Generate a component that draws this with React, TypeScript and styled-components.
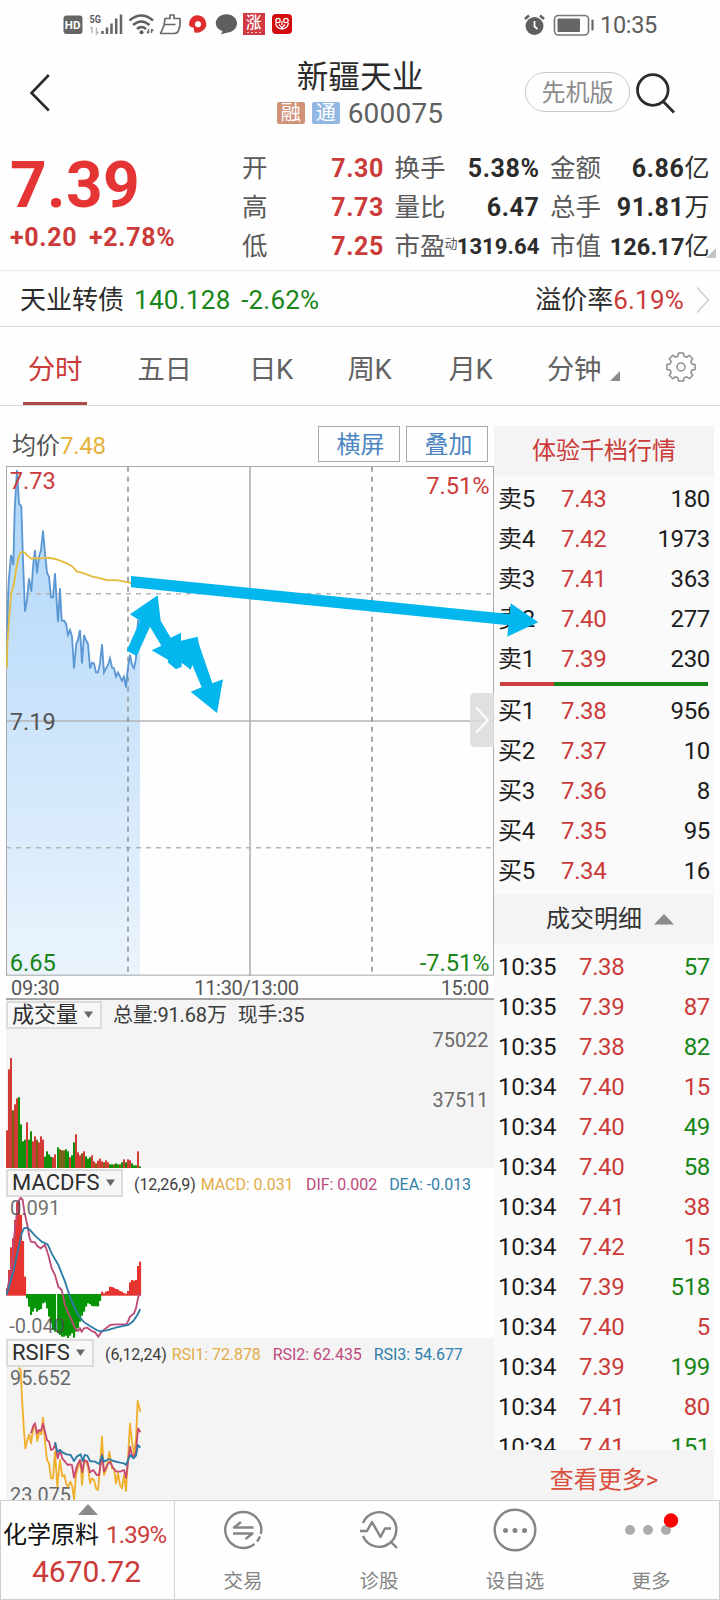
import React from "react";
import styled, { createGlobalStyle } from "styled-components";

const RED = "#cb3b39";
const GREEN = "#188518";
const FONT = 'Roboto, "Noto Sans CJK SC", sans-serif';

const Global = createGlobalStyle`
  * { box-sizing: border-box; }
  body { margin: 0; background: #fefefe; font-family: ${FONT}; color: #2b2b2b; }
  svg { display: block; flex: none; }
`;

const Screen = styled.main`
  position: relative;
  width: 720px;
  height: 1600px;
  overflow: hidden;
  display: flex;
  flex-direction: column;
  white-space: nowrap;
`;

/* ---------- status bar ---------- */
const StatusBar = styled.div`
  height: 48px;
  display: flex;
  align-items: center;
  justify-content: space-between;
  padding: 1px 63px 0 63px;
`;
const StatusGroup = styled.div`
  display: flex;
  align-items: center;
`;
const Clock = styled.span`
  font-size: 23.5px;
  line-height: 30px;
  letter-spacing: -0.3px;
  color: #5c5c5c;
  margin: 1px 0 0 6px;
`;

/* ---------- header ---------- */
const Header = styled.header`
  height: 88px;
  display: grid;
  grid-template-columns: 240px 240px 240px;
`;
const BackButton = styled.div`
  padding: 24px 0 0 28px;
`;
const TitleBlock = styled.div`
  display: flex;
  flex-direction: column;
  align-items: center;
`;
const Title = styled.h1`
  margin: 10px 0 0;
  font-size: 31.7px;
  font-weight: 400;
  line-height: 40px;
`;
const CodeLine = styled.div`
  display: flex;
  align-items: center;
  margin-top: -4px;
  gap: 7px;
`;
const Badge = styled.span<{ $color: string }>`
  width: 28px;
  height: 22px;
  border-radius: 2px;
  background: ${(p) => p.$color};
  color: #fff;
  font-size: 20px;
  line-height: 22px;
  text-align: center;
`;
const Code = styled.span`
  font-size: 28px;
  line-height: 36px;
  letter-spacing: 0.2px;
  color: #616161;
  margin: 2px 0 0 1px;
`;
const HeaderActions = styled.div`
  display: flex;
  align-items: flex-start;
  padding: 24px 0 0 45px;
  gap: 5px;
`;
const Pill = styled.span`
  width: 105px;
  height: 40px;
  border: 1px solid #c9c9c9;
  border-radius: 20px;
  color: #8d8d8d;
  font-size: 24px;
  line-height: 41px;
  text-align: center;
`;

/* ---------- quote ---------- */
const Quote = styled.section`
  height: 135px;
  border-bottom: 1px solid #ececec;
  display: flex;
  position: relative;
`;
const PriceBlock = styled.div`
  width: 242px;
  padding: 13px 0 0 10px;
  color: ${RED};
  font-weight: 700;
`;
const Price = styled.div`
  font-size: 64px;
  line-height: 74px;
  letter-spacing: 0.3px;
  color: #e53434;
`;
const Change = styled.div`
  display: flex;
  gap: 11.5px;
  font-size: 25px;
  line-height: 30px;
  letter-spacing: 0.7px;
`;
const Stats = styled.div`
  display: grid;
  grid-template-columns: 142px 145px 159.5px;
  grid-auto-rows: 39px;
  column-gap: 10.5px;
  padding-top: 13px;
  width: 468px;
`;
const Stat = styled.div`
  display: flex;
  justify-content: space-between;
  align-items: center;
  line-height: 39px;
`;
const StatLabel = styled.span`
  font-size: 25.5px;
  color: #5a5a5a;
`;
const Tiny = styled.sup`
  font-size: 13px;
  line-height: 1;
  vertical-align: 7px;
  margin-left: -1px;
  margin-right: -3px;
`;
const StatValue = styled.span<{ $red?: boolean; $size: number }>`
  font-size: ${(p) => p.$size}px;
  font-weight: 700;
  letter-spacing: ${(p) => (p.$size < 25 ? 0.1 : 0.6)}px;
  color: ${(p) => (p.$red ? RED : "#2c2c2c")};
`;
const Unit = styled.span`
  font-weight: 400;
  font-size: 25px;
  letter-spacing: 0;
`;
const Corner = styled.svg`
  position: absolute;
  right: 4px;
  bottom: 12px;
`;

/* ---------- bond row ---------- */
const BondRow = styled.section`
  height: 56px;
  border-bottom: 1px solid #dcdcdc;
  display: flex;
  align-items: center;
  padding: 2px 10px 0 20px;
  font-size: 26px;
  line-height: 52px;
`;
const Tint = styled.span<{ $color: string; $left?: number; $spacing?: number }>`
  color: ${(p) => p.$color};
  margin-left: ${(p) => p.$left ?? 0}px;
  ${(p) => p.$spacing !== undefined && `letter-spacing: ${p.$spacing}px;`}
`;
const Push = styled.span`
  margin-left: auto;
  margin-right: 11px;
`;

/* ---------- tabs ---------- */
const Tabs = styled.nav`
  height: 79px;
  border-bottom: 1px solid #d6d6d6;
  display: flex;
  padding-left: 23px;
`;
const Tab = styled.div<{ $w: number; $on?: boolean }>`
  width: ${(p) => p.$w}px;
  display: flex;
  align-items: center;
  justify-content: center;
  padding-top: 4px;
  font-size: 27.5px;
  letter-spacing: -0.3px;
  color: ${(p) => (p.$on ? RED : "#636363")};
  border-bottom: 3px solid ${(p) => (p.$on ? "#b04a47" : "transparent")};
  border-radius: 3px 3px 0 0;
`;
const TabArrow = styled.svg`
  margin: 18px 0 0 9px;
`;

/* ---------- body ---------- */
const Body = styled.div`
  height: 1094px;
  display: flex;
  padding-left: 6px;
`;
const ChartColumn = styled.div`
  width: 488px;
  display: flex;
  flex-direction: column;
`;
const ChartTop = styled.div`
  height: 60px;
  padding: 20px 6px 0 6px;
  display: flex;
  align-items: flex-start;
  font-size: 24px;
`;
const Average = styled.span`
  flex: 1;
  color: #555;
  line-height: 40px;
`;
const ChartButton = styled.span`
  width: 82px;
  height: 36px;
  margin-left: 6px;
  padding-left: 3px;
  border: 1px solid #a9a9a9;
  color: #4c86c2;
  line-height: 36px;
  text-align: center;
`;
const TimeAxis = styled.div`
  height: 24px;
  border-bottom: 2px solid #a5a5a5;
  display: grid;
  grid-template-columns: 1fr 1fr 1fr;
  padding: 0 5px;
  font-size: 20px;
  line-height: 25px;
  letter-spacing: -0.3px;
  color: #555;
  & > :nth-child(2) { text-align: center; padding-right: 7px; }
  & > :nth-child(3) { text-align: right; }
`;
const Panel = styled.section<{ $h: number; $gray?: boolean }>`
  position: relative;
  height: ${(p) => p.$h}px;
  background: ${(p) => (p.$gray ? "#f4f4f4" : "#fefefe")};
`;
const PanelHead = styled.div`
  position: absolute;
  top: 1px;
  left: 0;
  display: flex;
  align-items: flex-start;
`;
const Picker = styled.span<{ $w: number }>`
  width: ${(p) => p.$w}px;
  height: 28px;
  border: 2px solid #dcdcdc;
  background: #f7f7f7;
  display: flex;
  align-items: center;
  padding-left: 4px;
  gap: 6px;
  font-size: 22px;
  line-height: 24px;
  color: #2e2e2e;
`;
const Legend = styled.span<{ $color?: string; $left: number; $size?: number }>`
  margin-left: ${(p) => p.$left}px;
  margin-top: ${(p) => (p.$size ? 0 : 2)}px;
  font-size: ${(p) => p.$size ?? 16}px;
  line-height: 28px;
  letter-spacing: ${(p) => (p.$size ? -0.15 : -0.06)}px;
  color: ${(p) => p.$color ?? "#3c3c3c"};
`;

/* ---------- order book ---------- */
const BookColumn = styled.aside`
  width: 220px;
  margin-top: 20px;
  background: #fafafa;
  display: flex;
  flex-direction: column;
  font-size: 24px;
`;
const BookHead = styled.div<{ $color: string; $shift?: number; $drop?: number }>`
  height: 50px;
  flex: none;
  background: #f4f4f4;
  color: ${(p) => p.$color};
  display: flex;
  align-items: center;
  justify-content: center;
  gap: 12px;
  line-height: 30px;
  padding-top: ${(p) => p.$drop ?? 0}px;
  padding-left: ${(p) => p.$shift ?? 0}px;
`;
const Levels = styled.div<{ $top: number }>`
  padding-top: ${(p) => p.$top}px;
`;
const Row = styled.div<{ $price: number }>`
  display: grid;
  grid-template-columns: ${(p) => p.$price}px 1fr auto;
  height: 40px;
  line-height: 40px;
  padding: 0 4px 0 4px;
  letter-spacing: -0.35px;
  color: #1d1d1d;
`;
const Balance = styled.div`
  display: flex;
  height: 4px;
  margin: 3px 6px 5px;
  background: ${GREEN};
`;
const BalanceBuy = styled.div`
  width: 54px;
  background: #cb403c;
`;
const Ticks = styled.div`
  height: 506px;
  padding-top: 3px;
  overflow: hidden;
`;

/* ---------- bottom bar ---------- */
const BottomBar = styled.footer`
  height: 100px;
  display: flex;
  background: #fefefe;
  border: 1px solid #cfcfcf;
`;
const Sector = styled.div`
  width: 174px;
  border-right: 1px solid #d4d4d4;
  display: flex;
  flex-direction: column;
  align-items: center;
`;
const SectorName = styled.div`
  display: flex;
  gap: 7px;
  font-size: 24px;
  line-height: 36px;
  margin-top: 2px;
  color: #111;
  align-self: flex-start;
  padding-left: 2px;
`;
const SectorValue = styled.div`
  font-size: 30px;
  line-height: 38px;
  padding-right: 2px;
  color: ${RED};
`;
const NavItem = styled.div`
  flex: 1;
  display: flex;
  flex-direction: column;
  align-items: center;
  padding-top: 5px;
  font-size: 19.5px;
  line-height: 26px;
  color: #858585;
  gap: 15px;
`;

const Arrows = styled.svg`
  position: absolute;
  left: 120px;
  top: 560px;
`;
const SideTab = styled.svg`
  position: absolute;
  left: 470px;
  top: 693px;
`;

/* ---------- data ---------- */
const stats: { l: string; v: string; u?: string; red?: boolean; tiny?: string; size?: number }[] = [
  { l: "开", v: "7.30", red: true },
  { l: "换手", v: "5.38%" },
  { l: "金额", v: "6.86", u: "亿" },
  { l: "高", v: "7.73", red: true },
  { l: "量比", v: "6.47" },
  { l: "总手", v: "91.81", u: "万" },
  { l: "低", v: "7.25", red: true },
  { l: "市盈", v: "1319.64", tiny: "动", size: 22 },
  { l: "市值", v: "126.17", u: "亿", size: 23.5 },
];
const asks = [["卖5", "7.43", "180"], ["卖4", "7.42", "1973"], ["卖3", "7.41", "363"], ["卖2", "7.40", "277"], ["卖1", "7.39", "230"]];
const bids = [["买1", "7.38", "956"], ["买2", "7.37", "10"], ["买3", "7.36", "8"], ["买4", "7.35", "95"], ["买5", "7.34", "16"]];
const ticks: [string, string, string, boolean][] = [
  ["10:35", "7.38", "57", false], ["10:35", "7.39", "87", true], ["10:35", "7.38", "82", false],
  ["10:34", "7.40", "15", true], ["10:34", "7.40", "49", false], ["10:34", "7.40", "58", false],
  ["10:34", "7.41", "38", true], ["10:34", "7.42", "15", true], ["10:34", "7.39", "518", false],
  ["10:34", "7.40", "5", true], ["10:34", "7.39", "199", false], ["10:34", "7.41", "80", true],
  ["10:34", "7.41", "151", false],
];

/* Chart series use three units per pixel. */
const priceLine =
  "20,770 23,600 26,515 33,435 40,465 44,300 51,180 57,280 64,290 69,450 75,605 81,570 87,505 94,545 100,460 105,420 111,490 117,440 123,420 129,362 135,430 141,488 147,500 153,562 159,562 165,490 171,590 174,635 180,535 185,632 192,632 198,640 204,675 210,660 216,680 222,775 229,700 234,690 240,660 246,760 252,675 258,690 264,702 270,775 276,758 282,760 288,787 294,787 300,760 306,703 312,787 318,775 324,765 330,745 336,772 342,775 348,800 354,787 360,800 366,812 372,800 378,832 384,770 390,735 396,765 402,775 408,745 414,632 418,632";
const averageLine =
  "20,775 22,700 30,590 34,550 42,520 48,480 54,450 60,430 68,425 75,428 82,437 95,446 105,444 120,446 135,443 150,444 165,447 180,452 195,458 210,465 220,472 230,484 245,488 260,493 275,499 290,502 320,510 355,511 370,514 395,519";

const volume: [number, string][] = [
  [541, "r"], [358, "r"], [324, "r"], [481, "o"], [463, "r"], [445, "r"], [442, "g"], [523, "g"], [574, "g"], [569, "g"],
  [517, "r"], [569, "g"], [544, "g"], [574, "r"], [559, "r"], [569, "o"], [577, "r"], [559, "r"], [569, "r"], [620, "g"],
  [604, "g"], [613, "g"], [620, "g"], [622, "r"], [613, "r"], [592, "g"], [598, "o"], [601, "o"], [601, "o"], [598, "g"],
  [604, "g"], [622, "r"], [616, "g"], [577, "g"], [553, "r"], [607, "r"], [616, "r"], [610, "o"], [604, "r"], [619, "g"],
  [626, "g"], [622, "g"], [616, "r"], [634, "r"], [640, "o"], [632, "r"], [626, "r"], [634, "r"], [637, "o"], [631, "r"],
  [637, "r"], [643, "g"], [643, "g"], [643, "o"], [640, "g"], [643, "g"], [643, "o"], [637, "g"], [628, "r"], [637, "g"],
  [628, "r"], [631, "r"], [640, "g"], [646, "g"], [646, "g"], [604, "r"], [649, "g"],
];
const barColor: Record<string, string> = { r: "#d23b35", g: "#0f8f0a", o: "#7a6218" };
const macd = [
  370, 315, 247, 220, 165, 112, 110, 150, 228, 335, 400, 425, 450, 440, 430, 440, 435, 432, 415, 412, 430, 455, 475, 495, 500,
  505, 510, 515, 515, 512, 520, 512, 505, 518, 500, 490, 470, 452, 440, 425, 415, 418, 423, 424, 424, 424, 408,
  380, 385, 380, 378, 365, 366, 368, 372, 373, 378, 380, 384, 386, 378, 352, 345, 347, 345, 303, 290,
];
const barX = (i: number) => (i < 25 ? 18 : 21) + 6 * i;

const Down = () => (
  <svg width="10" height="9"><path d="M0 .5h9L4.500 7z" fill="#666" /></svg>
);

const PriceChart = () => (
  <svg width="488" height="510" viewBox="18 168 1464 1530" fontFamily={FONT} fontSize="71">
    <defs>
      <linearGradient id="area" x1="0" y1="0" x2="0" y2="1">
        <stop offset="0" stopColor="#aed5f9" />
        <stop offset="1" stopColor="#ebf4fd" />
      </linearGradient>
    </defs>
    <polygon points={`18,1698 ${priceLine} 420,632 420,1698`} fill="url(#area)" />
    <g stroke="#b4b4b4" strokeWidth="5" fill="none">
      <path d="M18 933H1482M750 168V1698" />
      <path d="M18 551H1482M18 1313H1482" strokeDasharray="15 15" strokeWidth="4.500" />
      <path d="M384 170V1690M1116 170V1690" strokeDasharray="15 15" stroke="#979797" />
    </g>
    <rect x="19.500" y="169.500" width="1461" height="1526" fill="none" stroke="#a9a9a9" strokeWidth="3" />
    <polyline points={priceLine} fill="none" stroke="#5b97d3" strokeWidth="5.500" />
    <polyline points={averageLine} fill="none" stroke="#e3bb3f" strokeWidth="5.500" />
    <text x="29" y="237" fill={RED}>7.73</text>
    <text x="29" y="961" fill="#555">7.19</text>
    <text x="29" y="1682" fill={GREEN}>6.65</text>
    <text x="1469" y="252" fill={RED} textAnchor="end">7.51%</text>
    <text x="1469" y="1682" fill={GREEN} textAnchor="end">-7.51%</text>
  </svg>
);

const VolumeChart = () => (
  <svg width="488" height="169" viewBox="18 150 1464 507" fontFamily={FONT} fontSize="59.500" fill="#6a6a6a">
    {volume.map(([top, c], i) => (
      <rect key={i} x={barX(i)} y={top} width="6" height={657 - top} fill={barColor[c]} />
    ))}
    <text x="1465" y="291" textAnchor="end">75022</text>
    <text x="1465" y="472" textAnchor="end">37511</text>
  </svg>
);

const MacdChart = () => (
  <svg width="488" height="170" viewBox="18 9 1464 510" fontFamily={FONT} fontSize="60" fill="none">
    {macd.map((v, i) => (
      <rect key={i} x={barX(i)} y={Math.min(v, 387)} width="6.300" height={v < 390 ? 392 - v : v - 387} fill={v < 390 ? "#e63431" : "#069506"} />
    ))}
    <path d="M170 388V515" stroke="#fff" strokeWidth="2" />
    <g strokeWidth="5.500">
      <polyline stroke="#bd4a76" points="20,388 35,300 45,190 55,110 62,98 68,105 73,140 82,180 88,215 93,230 105,232 112,243 122,250 135,240 145,270 155,310 165,330 175,365 185,375 195,420 205,445 215,465 225,490 235,498 240,490 245,500 252,490 262,488 275,498 285,502 295,515 305,500 315,492 330,480 345,478 380,478 390,455 402,445 408,430 415,395 421,385" />
      <polyline stroke="#2c7ca6" points="20,390 40,320 55,250 65,205 72,190 80,188 90,195 105,212 125,230 143,238 155,265 175,300 195,350 208,390 220,420 235,450 250,470 270,483 290,495 300,499 320,496 350,487 385,480 400,468 412,450 421,432" />
    </g>
    <g fill="#4a4a4a" fillOpacity=".8">
      <text x="30" y="150">0.091</text>
      <text x="28" y="503">-0.040</text>
    </g>
  </svg>
);

const RsiChart = () => (
  <svg width="488" height="162" viewBox="18 519 1464 486" fontFamily={FONT} fontSize="59.500" fill="none">
    <g fill="#686868">
      <text x="30" y="660">95.652</text>
      <text x="30" y="1012">23.075</text>
    </g>
    <g strokeWidth="5.500" strokeLinejoin="round">
      <polyline stroke="#f0af2c" points="55,608 62,615 66,700 72,800 76,850 82,825 88,808 93,835 100,790 106,785 112,828 118,800 124,808 129,758 135,830 141,885 147,895 153,940 159,940 165,860 172,965 180,885 187,935 193,930 199,958 205,965 211,950 217,965 222,1003 228,930 235,905 242,890 246,960 252,890 258,890 264,905 270,955 276,940 282,945 288,970 294,975 300,910 306,815 312,930 320,910 328,860 336,910 342,910 348,955 354,925 360,960 366,970 372,930 378,978 384,880 390,775 396,830 402,870 408,820 413,708 421,740" />
      <polyline stroke="#c8496f" points="93,805 100,782 105,775 111,805 117,795 123,797 129,776 135,800 141,825 147,830 153,855 160,852 166,835 173,880 180,855 187,880 195,890 203,900 210,898 216,900 222,938 230,905 240,885 247,922 253,885 262,890 270,922 280,915 290,930 297,930 306,870 312,920 322,900 330,890 340,910 350,920 360,920 372,915 378,938 384,890 390,845 396,870 403,875 408,860 414,790 421,802" />
      <polyline stroke="#2c7ca6" points="165,832 172,860 180,855 187,862 200,868 212,870 222,888 230,875 242,868 248,888 254,870 262,872 270,888 285,890 297,897 306,872 312,890 328,882 340,888 360,893 372,895 378,900 386,880 392,870 400,880 408,872 414,840 421,848" />
    </g>
  </svg>
);

const StatusIcons = () => (
  <svg width="232" height="30" viewBox="63 10 232 30" fontFamily="Roboto, sans-serif">
    <rect x="63.500" y="15.500" width="19" height="18.500" rx="3" fill="#666" />
    <text x="64.800" y="29.300" fontSize="11.500" fontWeight="700" fill="#fff">HD</text>
    <text x="89.500" y="22.500" fontSize="10.500" fontWeight="700" fill="#5c5c5c" textLength="11.500" lengthAdjust="spacingAndGlyphs">5G</text>
    <path d="M92 27v6.500M90.500 28.500l1.500-1.500M96.500 27.500v6.500l2-2" stroke="#bbb" strokeWidth="1.500" fill="none" />
    <path d="M102.500 31v3M107 27.500V34M111.500 23.500V34M116.200 18.500V34M121 14.500V34" stroke="#666" strokeWidth="2.500" />
    <g fill="none" stroke="#5f5f5f" strokeWidth="2.500">
      <path d="M129.500 20.500q12-10 23.500 0M133 25q8.300-7 16.500 0M137 29q4.500-4 9 0" />
    </g>
    <circle cx="141.500" cy="32.300" r="2" fill="#5f5f5f" />
    <path d="M148.500 29v4M151.500 29v4M147 31.500l1.500 2M151.500 29l1.700 2" stroke="#666" strokeWidth="1.300" />
    <path d="M165 18.500h5v-3.500h4v3.500h6v7l-1.500 5q-1 3-4 3h-14l3.500-8zM164.500 24.500h11" fill="none" stroke="#6a6a6a" strokeWidth="1.700" strokeLinejoin="round" />
    <path d="M193 16.500q5-3 10.500 1 5 6 1.500 11-4 5-10.500 4l-1-5q-4 0-4.500-3 0-5 4-8z" fill="#dd2d2f" />
    <circle cx="198" cy="24.300" r="3" fill="#fff" />
    <path d="M226.500 14.200c6 0 10.500 4 10.500 9s-4 8.500-9 9.300l-7 1.800 1.500-3c-4-1.600-6.700-4.500-6.700-8 0-5.200 4.700-9.100 10.700-9.100z" fill="#5f5f5f" />
    <rect x="243" y="13" width="22" height="22" fill="#cf3a43" />
    <text x="246" y="27.500" fontSize="15.500" fontWeight="500" fill="#fff" fontFamily='"Noto Sans CJK SC"'>涨</text>
    <path d="M247 32.500h14" stroke="#f5c8ca" strokeDasharray="2 2" />
    <rect x="272" y="14" width="20" height="20" rx="4" fill="#d2090d" />
    <g stroke="#fff" strokeWidth="1.300" fill="none">
      <circle cx="278" cy="20.500" r="2.200" />
      <circle cx="286" cy="20.500" r="2.200" />
      <path d="M275.500 23q1 5.500 6.500 6 5.500-.5 6.500-6M279 24.500l3 3.500 3-3.500M282 21v4" />
    </g>
  </svg>
);

const gear = (() => {
  const pts: string[] = [];
  for (let i = 0; i < 8; i++) {
    const a = (i * Math.PI) / 4 - Math.PI / 2;
    [[-0.27, 11.3], [-0.17, 14.3], [0.17, 14.3], [0.27, 11.3]].forEach(([d, r]) =>
      pts.push(`${(16 + r * Math.cos(a + d)).toFixed(1)},${(16 + r * Math.sin(a + d)).toFixed(1)}`)
    );
  }
  return pts.join(" ");
})();

export default function App() {
  return (
    <>
      <Global />
      <Screen>
        <StatusBar>
          <StatusGroup><StatusIcons /></StatusGroup>
          <StatusGroup>
            <svg width="71" height="28" viewBox="522 10 71 28">
              <circle cx="533.500" cy="25" r="9" fill="#5f5f5f" />
              <path d="M533.500 20v5.500l3 2.500" stroke="#fff" strokeWidth="1.800" fill="none" />
              <path d="M524 18l4-3.500M543 18l-4-3.500" stroke="#5f5f5f" strokeWidth="2.500" />
              <rect x="553.500" y="14.500" width="34" height="19.500" rx="4" fill="none" stroke="#777" strokeWidth="1.600" />
              <rect x="556.500" y="17.500" width="22.500" height="13.500" rx="1" fill="#666" />
              <path d="M591.500 19.500v9" stroke="#666" strokeWidth="2.200" strokeLinecap="round" />
            </svg>
            <Clock>10:35</Clock>
          </StatusGroup>
        </StatusBar>

        <Header>
          <BackButton>
            <svg width="24" height="42" viewBox="28 72 24 42"><path d="M48.800 75L31.500 93l17.300 17.500" fill="none" stroke="#2b2b2b" strokeWidth="2.600" /></svg>
          </BackButton>
          <TitleBlock>
            <Title>新疆天业</Title>
            <CodeLine>
              <Badge $color="#d0937a">融</Badge>
              <Badge $color="#92b7e3">通</Badge>
              <Code>600075</Code>
            </CodeLine>
          </TitleBlock>
          <HeaderActions>
            <Pill>先机版</Pill>
            <svg width="42" height="44" viewBox="635 72 42 44">
              <circle cx="652.800" cy="90" r="15.300" fill="none" stroke="#2c2c2c" strokeWidth="2.800" />
              <path d="M663.300 101.500L674 112.500" stroke="#2c2c2c" strokeWidth="2.800" />
            </svg>
          </HeaderActions>
        </Header>

        <Quote>
          <PriceBlock>
            <Price>7.39</Price>
            <Change><span>+0.20</span><span>+2.78%</span></Change>
          </PriceBlock>
          <Stats>
            {stats.map((s) => (
              <Stat key={s.l}>
                <StatLabel>{s.l}{s.tiny && <Tiny>{s.tiny}</Tiny>}</StatLabel>
                <StatValue $red={s.red} $size={s.size ?? 25}>{s.v}{s.u && <Unit>{s.u}</Unit>}</StatValue>
              </Stat>
            ))}
          </Stats>
          <Corner width="10" height="10"><path d="M10 0v10H0z" fill="#c4c4c4" /></Corner>
        </Quote>

        <BondRow>
          <span>天业转债</span>
          <Tint $color={GREEN} $left={10} $spacing={0.3}>140.128</Tint>
          <Tint $color={GREEN} $left={10.5} $spacing={0.2}>-2.62%</Tint>
          <Push>溢价率<Tint $color={RED} $spacing={0.2}>6.19%</Tint></Push>
          <svg width="15" height="28"><path d="M2 1.500L13.500 14 2 26.500" fill="none" stroke="#cfcfcf" strokeWidth="1.600" /></svg>
        </BondRow>

        <Tabs>
          <Tab $w={64} $on>分时</Tab>
          <Tab $w={155}>五日</Tab>
          <Tab $w={58}>日K</Tab>
          <Tab $w={139}>周K</Tab>
          <Tab $w={63}>月K</Tab>
          <Tab $w={163}>分钟<TabArrow width="10" height="10"><path d="M10 0v10H0z" fill="#8b8b8b" /></TabArrow></Tab>
          <Tab $w={32}>
            <svg width="32" height="32">
              <polygon points={gear} fill="none" stroke="#8d8d8d" strokeWidth="1.500" strokeLinejoin="round" />
              <circle cx="16" cy="16" r="4" fill="none" stroke="#8d8d8d" strokeWidth="1.500" />
            </svg>
          </Tab>
        </Tabs>

        <Body>
          <ChartColumn>
            <ChartTop>
              <Average>均价<Tint $color="#e6b23a" $spacing={-0.3}>7.48</Tint></Average>
              <ChartButton>横屏</ChartButton>
              <ChartButton>叠加</ChartButton>
            </ChartTop>
            <PriceChart />
            <TimeAxis><span>09:30</span><span>11:30/13:00</span><span>15:00</span></TimeAxis>
            <Panel $h={168} $gray>
              <VolumeChart />
              <PanelHead>
                <Picker $w={96}>成交量<Down /></Picker>
                <Legend $left={11} $size={20}>总量:91.68万</Legend>
                <Legend $left={11} $size={20}>现手:35</Legend>
              </PanelHead>
            </Panel>
            <Panel $h={170}>
              <MacdChart />
              <PanelHead>
                <Picker $w={117}>MACDFS<Down /></Picker>
                <Legend $left={11}>(12,26,9)</Legend>
                <Legend $left={5} $color="#e2ac48">MACD: 0.031</Legend>
                <Legend $left={12.5} $color="#bd4a80">DIF: 0.002</Legend>
                <Legend $left={12} $color="#3080ac">DEA: -0.013</Legend>
              </PanelHead>
            </Panel>
            <Panel $h={162} $gray>
              <RsiChart />
              <PanelHead>
                <Picker $w={88}>RSIFS<Down /></Picker>
                <Legend $left={11}>(6,12,24)</Legend>
                <Legend $left={5} $color="#e2ac48">RSI1: 72.878</Legend>
                <Legend $left={12} $color="#bd4a80">RSI2: 62.435</Legend>
                <Legend $left={12} $color="#3080ac">RSI3: 54.677</Legend>
              </PanelHead>
            </Panel>
          </ChartColumn>

          <BookColumn>
            <BookHead $color={RED}>体验千档行情</BookHead>
            <Levels $top={3}>
              {asks.map(([n, p, q]) => (
                <Row key={n} $price={63}><span>{n}</span><Tint $color={RED}>{p}</Tint><span>{q}</span></Row>
              ))}
            </Levels>
            <Balance><BalanceBuy /></Balance>
            <Levels $top={0}>
              {bids.map(([n, p, q]) => (
                <Row key={n} $price={63}><span>{n}</span><Tint $color={RED}>{p}</Tint><span>{q}</span></Row>
              ))}
            </Levels>
            <Levels $top={3}>
              <BookHead $color="#333" $shift={12}>成交明细<svg width="20" height="14"><path d="M0 12.500h20L10 2z" fill="#8a8a8a" /></svg></BookHead>
            </Levels>
            <Ticks>
              {ticks.map(([t, p, q, up], i) => (
                <Row key={i} $price={81}><span>{t}</span><Tint $color={RED}>{p}</Tint><Tint $color={up ? RED : GREEN}>{q}</Tint></Row>
              ))}
            </Ticks>
            <BookHead $color="#d9503f" $drop={10}>查看更多&gt;</BookHead>
          </BookColumn>
        </Body>

        <BottomBar>
          <Sector>
            <svg width="20" height="14"><path d="M0 14h20L10 3z" fill="#8a8a8a" /></svg>
            <SectorName>化学原料<Tint $color={RED} $spacing={-0.8}>1.39%</Tint></SectorName>
            <SectorValue>4670.72</SectorValue>
          </Sector>
          <NavItem>
            <svg width="48" height="48" viewBox="-24 -24 48 48" fill="none" stroke="#858585" strokeWidth="2.400">
              <path d="M17.800 4A18 18 0 1 0 11.500 14M14 11.500a18 18 0 0 0 3-5" />
              <path d="M10.500-2.500H-9l7-5.500M-10 3.500H9.500l-7 5.500" strokeLinejoin="round" />
            </svg>
            交易
          </NavItem>
          <NavItem>
            <svg width="48" height="48" viewBox="-24 -24 48 48" fill="none" stroke="#858585" strokeWidth="2.400">
              <path d="M-16-7A17.300 17.300 0 1 1-16 6M12 12l6 6" />
              <path d="M-19 1h7l5-9 8.500 15 4.500-8.500h6" strokeLinejoin="round" />
            </svg>
            诊股
          </NavItem>
          <NavItem>
            <svg width="48" height="48" viewBox="-24 -24 48 48" fill="#858585">
              <circle r="20.300" fill="none" stroke="#858585" strokeWidth="2.400" />
              <circle cx="-9.500" cy=".5" r="2.500" /><circle cy=".5" r="2.500" /><circle cx="9.500" cy=".5" r="2.500" />
            </svg>
            设自选
          </NavItem>
          <NavItem>
            <svg width="60" height="48" viewBox="-30 -24 60 48" fill="#acacac">
              <circle cx="-21" r="5" /><circle cx="-3" r="5" /><circle cx="15" r="5" />
              <circle cx="20" cy="-9.500" r="7.200" fill="#f80202" />
            </svg>
            更多
          </NavItem>
        </BottomBar>

        <SideTab width="24" height="54">
          <path d="M24 0H5Q0 0 0 5v44q0 5 5 5h19z" fill="#dadada" fillOpacity=".85" />
          <path d="M6 14.500L18 27 6 39.500" fill="none" stroke="#fff" strokeWidth="2" />
        </SideTab>
        <Arrows width="430" height="160" viewBox="360 450 1290 480" fill="#03b6ee">
          <polygon points="393,498 1529,612 1532,580 1615,637 1522,680 1525,646 393,532" />
          <polygon points="380,722 420,632 390,613 473,556 482,632 512,683 543,668 543,692 593,680 597,703 637,820 669,808 651,909 572,845 605,832 577,765 572,779 545,758 545,770 528,778 503,757 505,750 455,721 484,707 450,650 410,738" />
        </Arrows>
      </Screen>
    </>
  );
}
